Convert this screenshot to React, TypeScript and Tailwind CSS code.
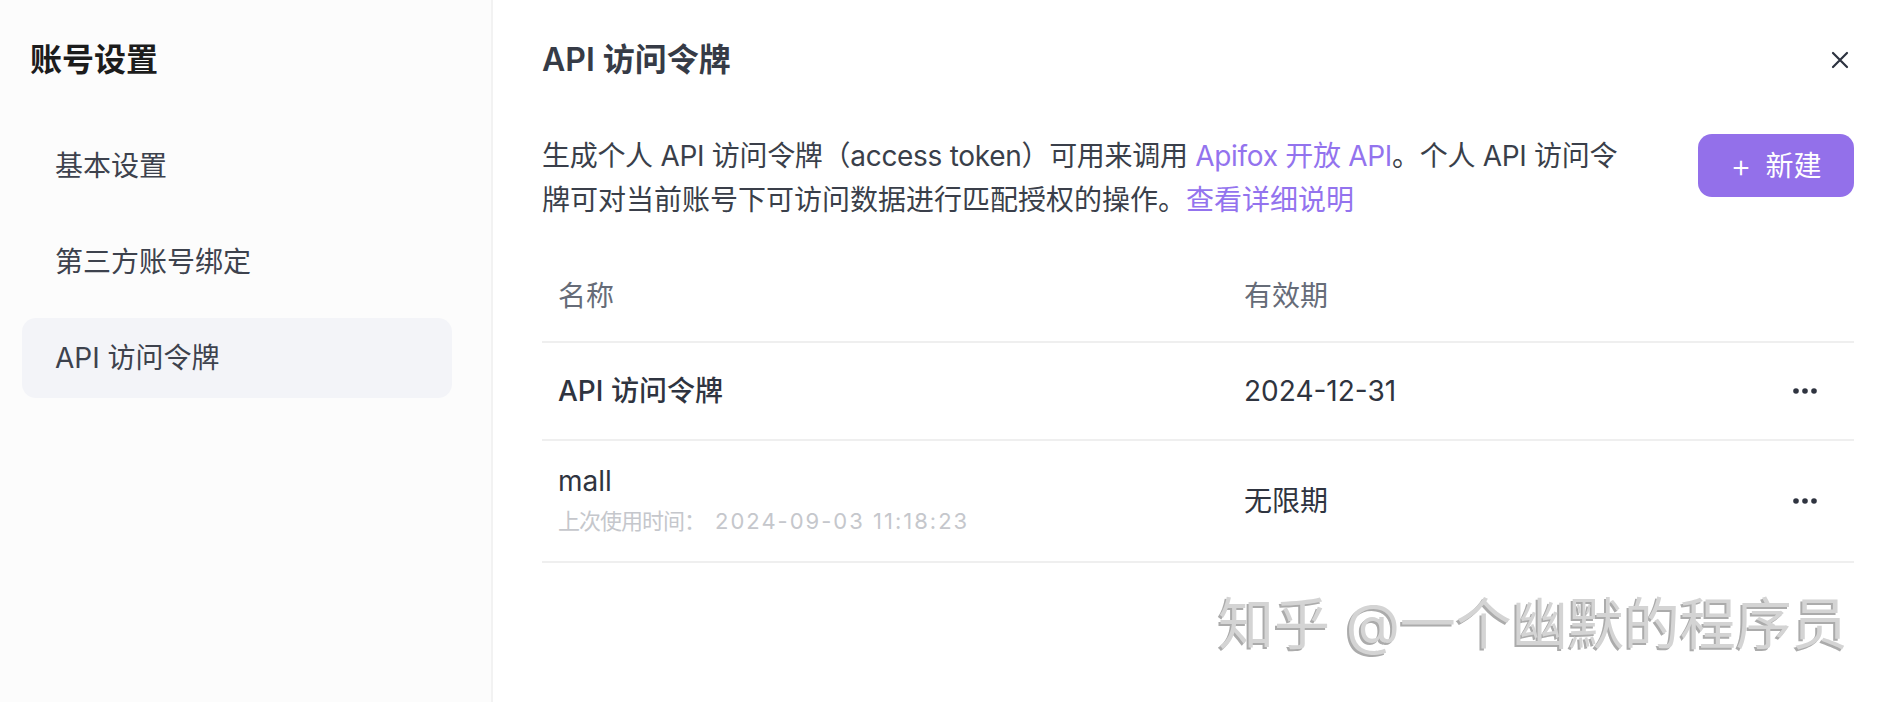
import React from 'react';

const navItems = ['基本设置', '第三方账号绑定', 'API 访问令牌'];

const tokens = [
  { name: 'API 访问令牌', expire: '2024-12-31', lastUsed: '' },
  { name: 'mall', expire: '无限期', lastUsed: '2024-09-03 11:18:23' },
];

const MoreIcon: React.FC = () => (
  <svg width="26" height="8" viewBox="0 0 26 8" fill="#2f3440">
    <circle cx="4" cy="4" r="2.8" />
    <circle cx="13" cy="4" r="2.8" />
    <circle cx="22" cy="4" r="2.8" />
  </svg>
);

const CloseIcon: React.FC = () => (
  <svg width="18" height="18" viewBox="0 0 18 18" fill="none" stroke="#2d3340" strokeWidth="2.2" strokeLinecap="round">
    <path d="M2 2 L16 16 M16 2 L2 16" />
  </svg>
);

const App: React.FC = () => {
  const active = 2;

  return (
    <div className="relative flex h-[702px] w-full bg-white text-[#3a3f4a] font-['Inter','Noto_Sans_CJK_SC',sans-serif]">
      {/* sidebar */}
      <aside className="w-[493px] shrink-0 bg-[#fcfcfc] border-r-2 border-[#f2f2f2] px-[22px] pt-[40px]">
        <h2 className="ml-[8px] h-[40px] text-[32px] leading-[40px] font-bold text-[#1c1c1c]">账号设置</h2>
        <nav className="mt-[46px] flex flex-col gap-[16px]">
          {navItems.map((item, i) => (
            <div
              key={item}
              className={`h-[80px] w-[430px] flex items-center px-[33px] rounded-[14px] text-[28px] text-[#3d424d] ${
                i === active ? 'bg-[#f3f4f8]' : ''
              }`}
            >
              {item}
            </div>
          ))}
        </nav>
      </aside>

      {/* content */}
      <main className="flex-1 pl-[49px] pr-[40px] pt-[40px]">
        <div className="flex h-[40px] items-center justify-between">
          <h1 className="text-[32px] leading-[40px] font-semibold text-[#363b46]">API 访问令牌</h1>
          <button className="mr-[4px] p-[1px]">
            <CloseIcon />
          </button>
        </div>

        <div className="mt-[54px] flex items-start justify-between">
          <p className="text-[28px] leading-[44px] text-[#3a3f4a] whitespace-nowrap">
            <span className="tracking-[-0.3px]">
              生成个人 API 访问令牌（access token）可用来调用 <span className="text-[#9373ee]">Apifox 开放 API</span>。个人 API 访问令
            </span>
            <br />
            牌可对当前账号下可访问数据进行匹配授权的操作。<span className="text-[#9373ee]">查看详细说明</span>
          </p>
          <button className="flex h-[63px] w-[156px] items-center justify-center gap-[14px] rounded-[14px] bg-[#9370ea] text-[28px] text-white">
            <span className="text-[32px] font-light leading-none">+</span>
            <span>新建</span>
          </button>
        </div>

        <div className="mt-[29px]">
          <div className="grid h-[92px] grid-cols-[686px_1fr_auto] items-center border-b-2 border-[#efefef] pl-[16px] pr-[36px] text-[28px] text-[#666c78]">
            <span>名称</span>
            <span>有效期</span>
            <span className="w-[26px]" />
          </div>
          {tokens.map((t) => (
            <div
              key={t.name}
              className={`grid grid-cols-[686px_1fr_auto] items-center border-b-2 border-[#efefef] pl-[16px] pr-[36px] ${
                t.lastUsed ? 'h-[122px]' : 'h-[98px]'
              }`}
            >
              <div className="flex flex-col">
                <span className={`text-[28px] leading-[40px] text-[#2f3440] ${t.lastUsed ? '-mt-[4px]' : 'font-medium'}`}>{t.name}</span>
                {t.lastUsed && (
                  <span className="mt-[4px] text-[22px] leading-[32px] text-[#c5c7cc] whitespace-nowrap">
                    <span className="tracking-[-1px]">上次使用时间：</span>
                    <span className="ml-[10px] tracking-[2px]">{t.lastUsed}</span>
                  </span>
                )}
              </div>
              <span className="text-[28px] text-[#2f3440]">{t.expire}</span>
              <MoreIcon />
            </div>
          ))}
        </div>
      </main>

      {/* watermark */}
      <div className="pointer-events-none absolute left-[1218px] top-[590px] text-[56px] leading-[68px] text-[#d4d4d4] [text-shadow:-2px_2px_0_#ababab] whitespace-nowrap">
        知乎 @一个幽默的程序员
      </div>
    </div>
  );
};

export default App;
